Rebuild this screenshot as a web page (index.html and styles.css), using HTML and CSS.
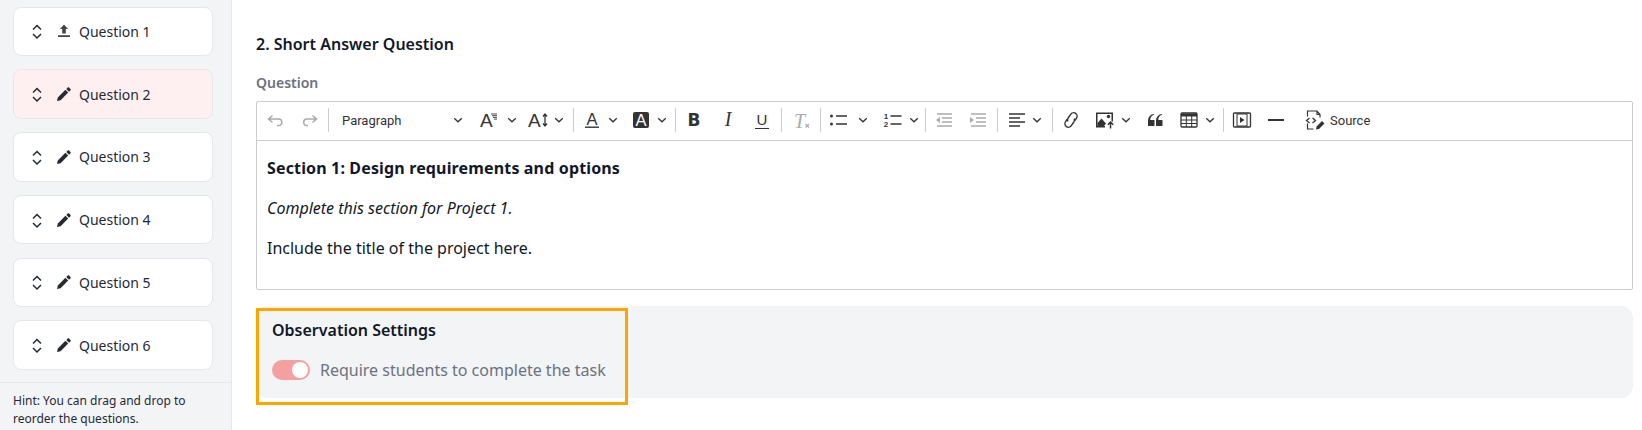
FILE: index.html
```html
<!DOCTYPE html>
<html>
<head>
    <title>Short Answer Question</title>
    <link rel="stylesheet" href="styles.css">
</head>
<body>
    <svg class="defs" width="0" height="0">
        <symbol id="chev" viewBox="0 0 10 10"><path d="M1.2 3.2 5 6.8l3.8-3.6" fill="none" stroke="#333" stroke-width="1.3"/></symbol>
        <symbol id="sort" viewBox="0 0 12 18"><path d="M2 7.5 6 3.5l4 4M2 12l4 4 4-4" fill="none" stroke="#1f2937" stroke-width="1.5"/></symbol>
        <symbol id="pencil" viewBox="0 0 14 14"><path d="M0 14l.8-3.6 7.6-7.6 2.8 2.8-7.6 7.6zM9.3 1.9 10.7.5c.4-.4 1-.4 1.4 0l1.4 1.4c.4.4.4 1 0 1.4l-1.4 1.4z" fill="#262b33"/></symbol>
    </svg>

    <div class="page">
        <div class="sidebar">
            <div class="question-list">
                <div class="question">
                    <svg class="sort-icon"><use href="#sort"/></svg>
                    <svg class="state-icon" viewBox="0 0 14 14"><path d="M7 .5 11 5H8.8v4.5H5.2V5H3zM1 11.2h12V13H1z" fill="#3f444c"/></svg>
                    <span>Question 1</span>
                </div>
                <div class="question selected">
                    <svg class="sort-icon"><use href="#sort"/></svg>
                    <svg class="state-icon"><use href="#pencil"/></svg>
                    <span>Question 2</span>
                </div>
                <div class="question">
                    <svg class="sort-icon"><use href="#sort"/></svg>
                    <svg class="state-icon"><use href="#pencil"/></svg>
                    <span>Question 3</span>
                </div>
                <div class="question">
                    <svg class="sort-icon"><use href="#sort"/></svg>
                    <svg class="state-icon"><use href="#pencil"/></svg>
                    <span>Question 4</span>
                </div>
                <div class="question">
                    <svg class="sort-icon"><use href="#sort"/></svg>
                    <svg class="state-icon"><use href="#pencil"/></svg>
                    <span>Question 5</span>
                </div>
                <div class="question">
                    <svg class="sort-icon"><use href="#sort"/></svg>
                    <svg class="state-icon"><use href="#pencil"/></svg>
                    <span>Question 6</span>
                </div>
            </div>
            <div class="hint">Hint: You can drag and drop to reorder the questions.</div>
        </div>

        <div class="main">
            <h2 class="title">2. Short Answer Question</h2>
            <div class="label">Question</div>

            <div class="editor">
                <div class="toolbar">
                    <div class="btn"><svg viewBox="0 0 20 20"><path d="M7.5 5.5 3.5 9l4 3.5M4 9h9.5a3.3 3.3 0 0 1 0 6.6H12" fill="none" stroke="#aaa" stroke-width="1.5"/></svg></div>
                    <div class="btn"><svg viewBox="0 0 20 20"><path d="M13.5 5.5 17.5 9l-4 3.5M17 9H8a3.3 3.3 0 0 0 0 6.6h1" fill="none" stroke="#aaa" stroke-width="1.5"/></svg></div>
                    <div class="sep"></div>
                    <div class="drop paragraph"><span>Paragraph</span><svg class="chev"><use href="#chev"/></svg></div>
                    <div class="drop w51 font-size">
                        <svg viewBox="0 0 20 20"><text x="3" y="17" class="glyph thin">A</text><path d="M14 4h6M15 5.7h5M16 7.4h4M17 9.1h3" stroke="#333" stroke-width=".9"/></svg>
                        <svg class="chev"><use href="#chev"/></svg>
                    </div>
                    <div class="drop w50">
                        <svg viewBox="0 0 20 20"><text x="0" y="17" class="glyph thin">A</text><path d="M17 4.5v11M15 6.5l2-2.500 2 2.500M15 13.5l2 2.500 2-2.500" fill="none" stroke="#333" stroke-width="1.3"/></svg>
                        <svg class="chev"><use href="#chev"/></svg>
                    </div>
                    <div class="sep"></div>
                    <div class="drop w49">
                        <svg viewBox="0 0 20 20"><text x="10" y="15" text-anchor="middle" class="glyph">A</text><path d="M3 17.2h14" stroke="#333" stroke-width="1.4"/></svg>
                        <svg class="chev"><use href="#chev"/></svg>
                    </div>
                    <div class="drop w49">
                        <svg viewBox="0 0 20 20"><rect x="2" y="2" width="16" height="16" rx="2" fill="#333"/><text x="10" y="15.5" text-anchor="middle" class="glyph light">A</text></svg>
                        <svg class="chev"><use href="#chev"/></svg>
                    </div>
                    <div class="sep"></div>
                    <div class="btn"><span class="letter-b">B</span></div>
                    <div class="btn"><svg viewBox="0 0 20 20"><text x="10" y="16" text-anchor="middle" class="glyph italic">I</text></svg></div>
                    <div class="btn"><span class="letter-u">U</span></div>
                    <div class="sep"></div>
                    <div class="btn w35"><svg viewBox="0 0 20 20"><text x="8.5" y="18" text-anchor="middle" class="glyph italic off">T</text><path d="M14.5 14l3.5 3.5M18 14l-3.5 3.5" stroke="#aaa" stroke-width="1.2"/></svg></div>
                    <div class="sep"></div>
                    <div class="drop w54">
                        <svg viewBox="0 0 20 20"><circle cx="2.5" cy="6" r="1.5" fill="#333"/><circle cx="2.5" cy="14" r="1.5" fill="#333"/><path d="M7 6h11M7 14h11" stroke="#333" stroke-width="1.5"/></svg>
                        <svg class="chev"><use href="#chev"/></svg>
                    </div>
                    <div class="drop w47">
                        <svg viewBox="0 0 20 20"><text x="3" y="8.5" text-anchor="middle" class="glyph tiny">1</text><text x="3" y="17" text-anchor="middle" class="glyph tiny">2</text><path d="M7.5 6h11M7.5 14h11" stroke="#333" stroke-width="1.5"/></svg>
                        <svg class="chev"><use href="#chev"/></svg>
                    </div>
                    <div class="sep"></div>
                    <div class="btn"><svg viewBox="0 0 20 20"><path d="M3 4h15M8 8h10M8 12h10M3 16h15" stroke="#aaa" stroke-width="1.4"/><path d="M6 7v6l-4-3z" fill="#aaa"/></svg></div>
                    <div class="btn"><svg viewBox="0 0 20 20"><path d="M3 4h15M8 8h10M8 12h10M3 16h15" stroke="#aaa" stroke-width="1.4"/><path d="M2 7v6l4-3z" fill="#aaa"/></svg></div>
                    <div class="sep"></div>
                    <div class="drop w51">
                        <svg viewBox="0 0 20 20"><path d="M3 4h16M3 8h11M3 12h16M3 16h11" stroke="#333" stroke-width="1.5"/></svg>
                        <svg class="chev"><use href="#chev"/></svg>
                    </div>
                    <div class="sep"></div>
                    <div class="btn"><svg viewBox="0 0 20 20"><g transform="rotate(-55 10 10)" fill="none" stroke="#333" stroke-width="1.4"><path d="M8.5 6.500H5.5a3.5 3.5 0 0 0 0 7H10a3.5 3.5 0 0 0 3-1.800"/><path d="M11.5 13.500h3a3.5 3.5 0 0 0 0-7H10a3.5 3.5 0 0 0-3 1.800"/></g></svg></div>
                    <div class="drop w50">
                        <svg viewBox="0 0 20 20"><path d="M1 2.5h17v9h-1.500V4H2.500v12H10v1.500H1z" fill="#333"/><path d="M2.500 16V13l4-4.500 4.500 5-2 2.500z" fill="#333"/><circle cx="13.5" cy="6.5" r="1.7" fill="#333"/><path d="M15.5 18.5v-6M12.800 14.800l2.700-2.800 2.700 2.800" fill="none" stroke="#333" stroke-width="1.5"/></svg>
                        <svg class="chev"><use href="#chev"/></svg>
                    </div>
                    <div class="btn"><svg viewBox="0 0 20 20"><path d="M3 10.423a6.5 6.5 0 0 1 6.056-6.408l.038.67C6.448 5.423 5.354 7.663 5.22 10H9c.552 0 .5.432.5.986v4.511c0 .554-.448.503-1 .503h-5c-.552 0-.5-.449-.5-1.003v-4.574zm8 0a6.5 6.5 0 0 1 6.056-6.408l.038.67c-2.646.739-3.74 2.979-3.873 5.315H17c.552 0 .5.432.5.986v4.511c0 .554-.448.503-1 .503h-5c-.552 0-.5-.449-.5-1.003v-4.574z" fill="#333"/></svg></div>
                    <div class="drop w49">
                        <svg viewBox="0 0 20 20"><rect x="2" y="3" width="16" height="14" rx="1" fill="none" stroke="#333" stroke-width="1.3"/><path d="M2 5h16" stroke="#333" stroke-width="3"/><path d="M2 10h16M2 13.5h16M7.3 6v11M12.7 6v11" stroke="#333" stroke-width="1"/></svg>
                        <svg class="chev"><use href="#chev"/></svg>
                    </div>
                    <div class="sep"></div>
                    <div class="btn"><svg viewBox="0 0 20 20"><rect x="1.5" y="3" width="17" height="14" rx="1" fill="none" stroke="#333" stroke-width="1.3"/><rect x="5" y="4" width="10" height="12" fill="none" stroke="#333" stroke-width="1"/><path d="M8 7l4.500 3L8 13z" fill="#333"/></svg></div>
                    <div class="btn"><svg viewBox="0 0 20 20"><path d="M2 10h16" stroke="#333" stroke-width="2"/></svg></div>
                    <div class="source">
                        <svg viewBox="0 0 20 20"><path d="M2.500 6.5V1H12l3 3.500v3M2.500 13.5V19h6M12 1v3.500h3" fill="none" stroke="#333" stroke-width="1.2"/><path d="M4.500 8 1.500 10.500l3 2.500M7.500 13l3-2.500-3-2.500" fill="none" stroke="#333" stroke-width="1.3"/><path d="M11 19.500l.6-3 5.400-5.400 2.400 2.400-5.400 5.400z" fill="#333"/></svg>
                        <span>Source</span>
                    </div>
                </div>
                <div class="content">
                    <p><strong>Section 1: Design requirements and options</strong></p>
                    <p><em>Complete this section for Project 1.</em></p>
                    <p>Include the title of the project here.</p>
                </div>
            </div>

            <div class="settings">
                <div class="settings-title">Observation Settings</div>
                <div class="setting-row">
                    <div class="toggle"><div class="knob"></div></div>
                    <span>Require students to complete the task</span>
                </div>
                <div class="highlight"></div>
            </div>
        </div>
    </div>
</body>
</html>
```

FILE: styles.css
```css
html, body {
    margin: 0;
    height: 430px;
    overflow: hidden;
}

body {
    font-family: "Noto Sans", sans-serif;
    color: #1f2937;
    background-color: #fff;
}

.defs {
    display: block;
    height: 0;
}

.page {
    display: flex;
    height: 430px;
}

/* left column */
.sidebar {
    width: 232px;
    flex-shrink: 0;
    display: flex;
    flex-direction: column;
    box-sizing: border-box;
    background-color: #f3f4f6;
    border-right: 1px solid #e5e7eb;
}

.question-list {
    flex: 1;
    display: flex;
    flex-direction: column;
    gap: 13.3px;
    padding: 6.5px 18px 0 13px;
}

.question {
    height: 49.5px;
    box-sizing: border-box;
    display: flex;
    align-items: center;
    padding-left: 17px;
    background-color: #fff;
    border: 1px solid #e5e7eb;
    border-radius: 8px;
    font-size: 14px;
}

.question.selected {
    background-color: #fef0f0;
}

.sort-icon {
    width: 12px;
    height: 18px;
    margin-right: 14px;
}

.state-icon {
    width: 14px;
    height: 14px;
    margin-right: 8px;
}

.hint {
    height: 48px;
    box-sizing: border-box;
    padding: 9px 13px 0;
    border-top: 1px solid #e5e7eb;
    font-size: 12px;
    line-height: 18px;
}

/* right column */
.main {
    flex: 1;
    padding: 0 9px 0 24px;
}

.title {
    margin: 33px 0 0;
    font-size: 16px;
    font-weight: 600;
    line-height: 22px;
    color: #111827;
}

.label {
    margin-top: 18px;
    font-size: 14px;
    font-weight: 600;
    line-height: 20px;
    color: #6b7280;
}

.editor {
    margin-top: 8px;
    border: 1px solid #ccc;
    border-radius: 2px;
}

.toolbar {
    height: 36px;
    padding: 0 0 2px 1px;
    display: flex;
    align-items: center;
    border-bottom: 1px solid #ccc;
    font-family: Roboto, sans-serif;
    font-size: 13px;
    color: #333;
}

.toolbar svg {
    width: 20px;
    height: 20px;
    flex-shrink: 0;
}

.toolbar svg.chev {
    width: 10px;
    height: 10px;
    margin-left: 6px;
}

.btn {
    width: 34px;
    height: 24px;
    display: flex;
    justify-content: center;
    align-items: center;
}

.btn.w35 {
    width: 35px;
}

.drop {
    display: flex;
    align-items: center;
    padding-left: 7px;
    box-sizing: border-box;
}

.w47 { width: 47px; }
.w49 { width: 49px; }
.w50 { width: 50px; }
.w51 { width: 51px; }
.w54 { width: 54px; }

.toolbar .font-size svg.chev {
    margin-left: 10px;
}

.toolbar .w54 svg.chev {
    margin-left: 9px;
}

.drop.paragraph {
    width: 140px;
    padding-left: 12px;
    justify-content: space-between;
    padding-right: 7px;
}

.sep {
    width: 1px;
    height: 24px;
    margin: 0 1px 0 2px;
    background-color: #ccc;
}

.source {
    display: flex;
    align-items: center;
    gap: 5px;
    padding-left: 12px;
}

.letter-b {
    font-family: "DejaVu Sans", sans-serif;
    font-weight: bold;
    font-size: 17px;
    line-height: 24px;
}

.letter-u {
    padding: 0 2px;
    font-family: "Liberation Sans", sans-serif;
    font-size: 15px;
    line-height: 17px;
    border-bottom: 1.4px solid #333;
}

.glyph {
    font-family: "Liberation Sans", sans-serif;
    font-size: 16.5px;
    fill: #333;
}

.glyph.thin {
    font-size: 19px;
}

.glyph.light {
    fill: #fff;
}

.glyph.italic {
    font-family: "Liberation Serif", serif;
    font-style: italic;
    font-size: 20px;
}

.glyph.off {
    fill: #aaa;
}

.glyph.tiny {
    font-size: 8px;
    font-weight: bold;
}

.content {
    height: 148px;
    box-sizing: border-box;
    padding: 15px 10px 0;
    font-size: 16px;
    line-height: 24px;
    color: #111827;
}

.content p {
    margin: 0 0 16px;
}

.content strong {
    letter-spacing: .15px;
}

.settings {
    position: relative;
    height: 92px;
    box-sizing: border-box;
    margin-top: 16px;
    padding: 12px 16px;
    background-color: #f3f4f6;
    border-radius: 12px;
}

.settings-title {
    font-size: 16px;
    font-weight: 600;
    line-height: 24px;
    color: #111827;
}

.setting-row {
    display: flex;
    align-items: center;
    gap: 10px;
    margin-top: 18px;
    font-size: 16px;
    line-height: 20px;
    color: #6b7280;
}

.toggle {
    width: 38px;
    height: 20px;
    box-sizing: border-box;
    padding: 2px;
    display: flex;
    justify-content: flex-end;
    background-color: #f4a0a0;
    border-radius: 10px;
}

.knob {
    width: 16px;
    height: 16px;
    background-color: #fff;
    border-radius: 50%;
}

/* orange box drawn over the panel */
.highlight {
    position: absolute;
    left: 0;
    top: 2px;
    width: 372px;
    height: 97px;
    box-sizing: border-box;
    border: 3px solid #ffa500;
}
```
